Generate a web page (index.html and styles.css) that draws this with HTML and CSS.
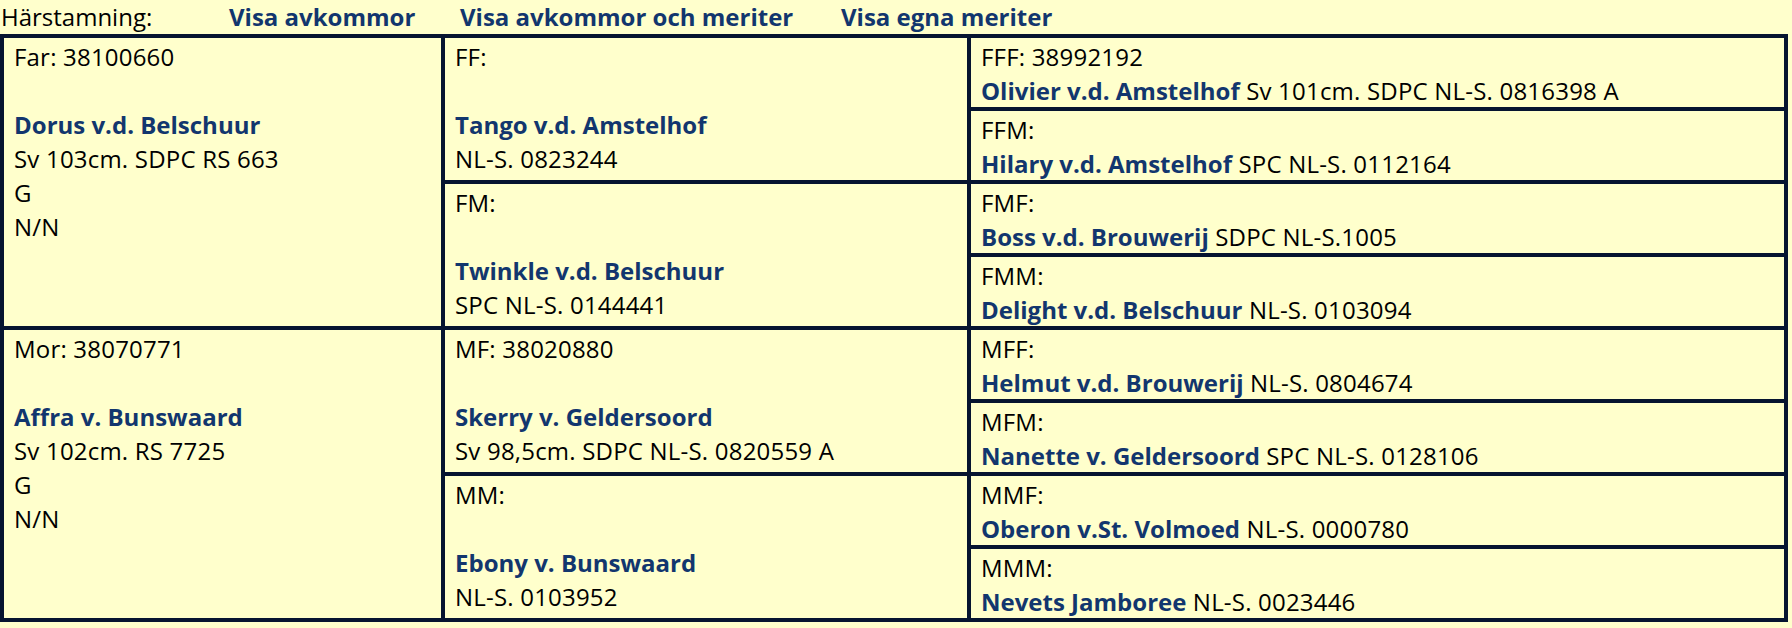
FILE: index.html
```html
<!DOCTYPE html>
<html lang="sv">
<head>
<meta charset="utf-8">
<title>Härstamning</title>
<link rel="stylesheet" href="styles.css">
</head>
<body>
<div class="header">
  <span class="label">Härstamning:</span>
  <a class="link" href="#">Visa avkommor</a>
  <a class="link" href="#">Visa avkommor och meriter</a>
  <a class="link" href="#">Visa egna meriter</a>
</div>
<div class="pedigree">
  <div class="cell parent p1">Far: 38100660<br><br><b class="name">Dorus v.d. Belschuur</b><br>Sv 103cm. SDPC RS 663<br>G<br>N/N</div>
  <div class="cell gp g1">FF:<br><br><b class="name">Tango v.d. Amstelhof</b><br>NL-S. 0823244</div>
  <div class="cell ggp r1">FFF: 38992192<br><b class="name">Olivier v.d. Amstelhof</b> Sv 101cm. SDPC NL-S. 0816398 A</div>
  <div class="cell ggp r2">FFM:<br><b class="name">Hilary v.d. Amstelhof</b> SPC NL-S. 0112164</div>
  <div class="cell gp g2">FM:<br><br><b class="name">Twinkle v.d. Belschuur</b><br>SPC NL-S. 0144441</div>
  <div class="cell ggp r3">FMF:<br><b class="name">Boss v.d. Brouwerij</b> SDPC NL-S.1005</div>
  <div class="cell ggp r4">FMM:<br><b class="name">Delight v.d. Belschuur</b> NL-S. 0103094</div>
  <div class="cell parent p2">Mor: 38070771<br><br><b class="name">Affra v. Bunswaard</b><br>Sv 102cm. RS 7725<br>G<br>N/N</div>
  <div class="cell gp g3">MF: 38020880<br><br><b class="name">Skerry v. Geldersoord</b><br>Sv 98,5cm. SDPC NL-S. 0820559 A</div>
  <div class="cell ggp r5">MFF:<br><b class="name">Helmut v.d. Brouwerij</b> NL-S. 0804674</div>
  <div class="cell ggp r6">MFM:<br><b class="name">Nanette v. Geldersoord</b> SPC NL-S. 0128106</div>
  <div class="cell gp g4">MM:<br><br><b class="name">Ebony v. Bunswaard</b><br>NL-S. 0103952</div>
  <div class="cell ggp r7">MMF:<br><b class="name">Oberon v.St. Volmoed</b> NL-S. 0000780</div>
  <div class="cell ggp r8">MMM:<br><b class="name">Nevets Jamboree</b> NL-S. 0023446</div>
</div>
</body>
</html>
```
FILE: styles.css
```css
html, body {
  margin: 0;
  padding: 0;
  background: #ffffcc;
}
body {
  font-family: "Open Sans", "Noto Sans", sans-serif;
  font-size: 24px;
  color: #000;
  line-height: 34px;
}
.header {
  display: grid;
  grid-template-columns: 228px 231px 381px auto;
  height: 34px;
  line-height: 34px;
  padding-left: 1px;
}
.link {
  color: #12366e;
  font-weight: 700;
  text-decoration: none;
}
.pedigree {
  display: grid;
  width: 1788px;
  box-sizing: border-box;
  grid-template-columns: 441px 526px 817px;
  grid-template-rows: repeat(8, 73px);
  border-left: 4px solid #061430;
  border-top: 4px solid #061430;
}
.cell {
  box-sizing: border-box;
  border-right: 4px solid #061430;
  border-bottom: 4px solid #061430;
  padding: 2px 0 0 10px;
  white-space: nowrap;
  overflow: hidden;
  letter-spacing: 0.2px;
}
.parent { grid-column: 1; padding-left: 10px; }
.p1 { grid-row: 1 / span 4; }
.p2 { grid-row: 5 / span 4; }
.gp { grid-column: 2; }
.g1 { grid-row: 1 / span 2; }
.g2 { grid-row: 3 / span 2; }
.g3 { grid-row: 5 / span 2; }
.g4 { grid-row: 7 / span 2; }
.ggp { grid-column: 3; }
.r1 { grid-row: 1; }
.r2 { grid-row: 2; }
.r3 { grid-row: 3; }
.r4 { grid-row: 4; }
.r5 { grid-row: 5; }
.r6 { grid-row: 6; }
.r7 { grid-row: 7; }
.r8 { grid-row: 8; }
.name {
  color: #12366e;
  font-weight: 700;
  letter-spacing: 0;
}
```
